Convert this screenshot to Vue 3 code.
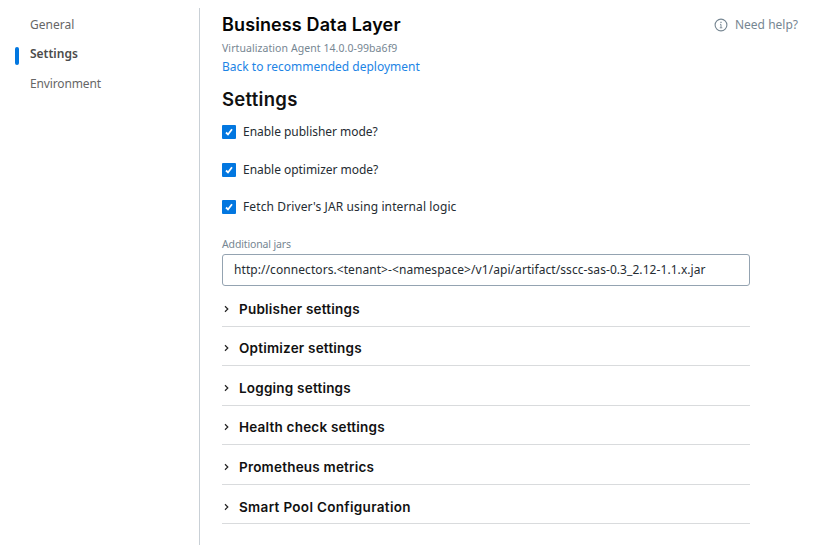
<script setup>
const nav = [
  { label: 'General', active: false },
  { label: 'Settings', active: true },
  { label: 'Environment', active: false },
]
const options = [
  { label: 'Enable publisher mode?', key: 'publisher' },
  { label: 'Enable optimizer mode?', key: 'optimizer' },
  { label: "Fetch Driver's JAR using internal logic", key: 'fetch' },
]
const sections = [
  { label: 'Publisher settings', key: 'pub' },
  { label: 'Optimizer settings', key: 'opt' },
  { label: 'Logging settings', key: 'log' },
  { label: 'Health check settings', key: 'health' },
  { label: 'Prometheus metrics', key: 'prom' },
  { label: 'Smart Pool Configuration', key: 'pool' },
]
const jar = 'http://connectors.<tenant>-<namespace>/v1/api/artifact/sscc-sas-0.3_2.12-1.1.x.jar'
</script>

<template>
  <div class="page">
    <nav class="sidebar">
      <a v-for="n in nav" :key="n.label" class="nav-item" :class="{ active: n.active }">
        <span class="marker"></span><span class="nav-label" :class="n.label.toLowerCase()">{{ n.label }}</span>
      </a>
    </nav>
    <main class="content">
      <header class="top">
        <h1><span>Business Data Layer</span></h1>
        <a class="help">
          <svg width="14" height="14" viewBox="0 0 14 14" fill="none" stroke="currentColor">
            <circle cx="7" cy="7" r="5.9" stroke-width="1.1" />
            <path d="M6 6.4h1v3.4M5.8 9.8h2.5" stroke-width=".9" />
            <path d="M6.4 4.3h1.2" stroke-width="1.2" />
          </svg>
          <span>Need help?</span>
        </a>
      </header>
      <p class="version"><span>Virtualization Agent 14.0.0-99ba6f9</span></p>
      <a class="back"><span>Back to recommended deployment</span></a>
      <h2><span>Settings</span></h2>
      <div class="options">
        <label v-for="o in options" :key="o.key" class="option" :class="o.key">
          <svg class="check" width="14" height="14" viewBox="0 0 14 14">
            <rect width="14" height="14" rx="1" fill="#0277e0" />
            <path d="M4 7.5L6 9.5L10 4.3" fill="none" stroke="#fff" stroke-width="1.8" />
          </svg>
          <span>{{ o.label }}</span>
        </label>
      </div>
      <div class="field-label"><span>Additional jars</span></div>
      <div class="field"><span>{{ jar }}</span></div>
      <section v-for="s in sections" :key="s.key" class="section">
        <svg width="5" height="8" viewBox="0 0 5 8" fill="none" stroke="#222" stroke-width="1.2">
          <path d="M1 1.3L3.8 4L1 6.7" />
        </svg>
        <span :class="s.key">{{ s.label }}</span>
      </section>
    </main>
  </div>
</template>

<style>
body { background: #fff; }
</style>

<style scoped>
.page { display: flex; height: 545px; box-sizing: border-box; padding-top: 8px; overflow: hidden; font: 12px/18px "Noto Sans", sans-serif; color: #252c32; white-space: nowrap; }
.sidebar { width: 199px; flex: none; border-right: 1px solid #c9d0d6; box-sizing: content-box; }
.nav-item { display: flex; height: 29.5px; color: #666; }
.nav-label { padding-top: 8px; line-height: 18px; }
.nav-label.settings { padding-top: 7px; }
.nav-label.environment { letter-spacing: -.13px; }
.marker { width: 4px; height: 18px; margin: 9.5px 11px 0 15px; border-radius: 2px; flex: none; }
.active .marker { background: #0277e0; }
.active { color: #4b4b4b; font-weight: 600; }
.content { width: 598px; padding-left: 22px; box-sizing: border-box; flex: none; }
.top { display: flex; justify-content: space-between; height: 32px; }
h1, h2, p { margin: 0; }
h1 { font: 600 18px/34px Inter, sans-serif; color: #050505; letter-spacing: .12px; }
.help { display: flex; gap: 7px; padding-top: 8px; color: #768692; height: 18px; align-items: center; }
.version { font-size: 10.5px; line-height: 16px; color: #768692; letter-spacing: .07px; }
.back { display: block; line-height: 22px; height: 20px; color: #1c84e5; }
h2 { font: 600 18.5px/30px Inter, sans-serif; color: #111; margin-top: 8px; height: 31px; letter-spacing: .28px; }
.options { padding-top: 8px; display: grid; grid-template-rows: 38px 37px 38px; }
.option { display: flex; align-items: center; height: 18px; gap: 7px; letter-spacing: -.03px; }
.fetch { letter-spacing: .11px; }
.field-label { font-size: 10.5px; line-height: 16px; color: #768692; height: 16px; letter-spacing: -.14px; }
.field { width: 528px; height: 32px; border: 1px solid #94a3b1; border-radius: 3px; box-sizing: border-box; padding: 0 11px; line-height: 30px; margin-top: 2px; letter-spacing: .07px; }
.section { width: 528px; height: 39.5px; border-bottom: 1px solid #d9dbdd; box-sizing: border-box; display: flex; align-items: center; gap: 10px; padding: 5.4px 0 0 2px; color: #111; font: 600 13.5px/18px Inter, sans-serif; letter-spacing: .21px; }
.field + .section { height: 40.5px; padding-top: 7px; }
.section:last-child { padding-top: 6px; }
.pool { letter-spacing: .32px; }
</style>
